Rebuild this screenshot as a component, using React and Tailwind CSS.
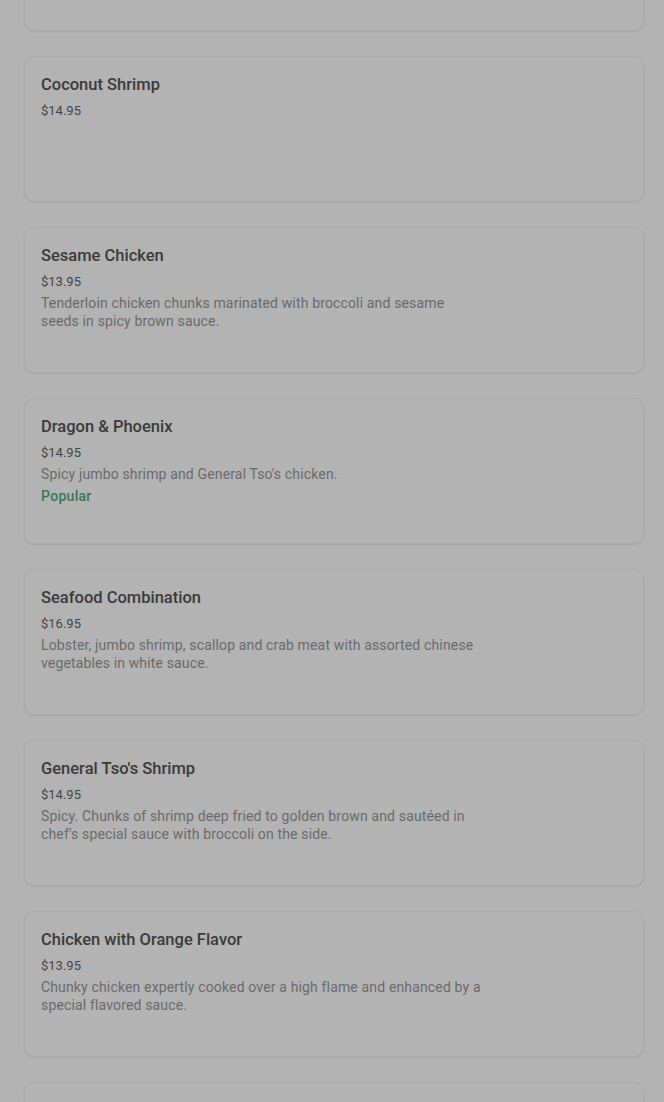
const items = [
  { name: "", price: "", desc: "" },
  { name: "Coconut Shrimp", price: "$14.95" },
  {
    name: "Sesame Chicken",
    price: "$13.95",
    desc: "Tenderloin chicken chunks marinated with broccoli and sesame seeds in spicy brown sauce.",
  },
  {
    name: "Dragon & Phoenix",
    price: "$14.95",
    desc: "Spicy jumbo shrimp and General Tso's chicken.",
    popular: true,
  },
  {
    name: "Seafood Combination",
    price: "$16.95",
    desc: "Lobster, jumbo shrimp, scallop and crab meat with assorted chinese vegetables in white sauce.",
  },
  {
    name: "General Tso's Shrimp",
    price: "$14.95",
    desc: "Spicy. Chunks of shrimp deep fried to golden brown and sautéed in chef's special sauce with broccoli on the side.",
  },
  {
    name: "Chicken with Orange Flavor",
    price: "$13.95",
    desc: "Chunky chicken expertly cooked over a high flame and enhanced by a special flavored sauce.",
  },
  { name: "", price: "" },
];

function MenuCard({ item }) {
  return (
    <div className="h-[146px] rounded-[10px] border border-[#a9a9a9] bg-[#b3b3b3] px-4 pt-[17px] shadow-[0_1px_2px_rgba(0,0,0,0.08)]">
      {item.name && (
        <h3 className="text-[16.5px] leading-[22px] font-medium text-[#3a3a3a]">{item.name}</h3>
      )}
      {item.price && (
        <p className="mt-1.5 text-[13px] leading-[18px] text-[#444444]">{item.price}</p>
      )}
      {item.desc && (
        <p className="mt-[3px] max-w-[442px] text-[14px] leading-[18px] tracking-[0.15px] text-[#6a6a6a]">
          {item.desc}
        </p>
      )}
      {item.popular && (
        <p className="mt-1 text-[14px] leading-[18px] font-medium tracking-[0.3px] text-[#3b7656]">Popular</p>
      )}
    </div>
  );
}

export default function App() {
  return (
    <div
      className="h-[1102px] overflow-hidden bg-[#b3b3b3]"
      style={{ fontFamily: "Roboto, 'Liberation Sans', sans-serif" }}
    >
      <div className="ml-6 mr-5 -mt-[115px] flex flex-col gap-[25px]">
        {items.map((item, i) => (
          <MenuCard key={i} item={item} />
        ))}
      </div>
    </div>
  );
}
